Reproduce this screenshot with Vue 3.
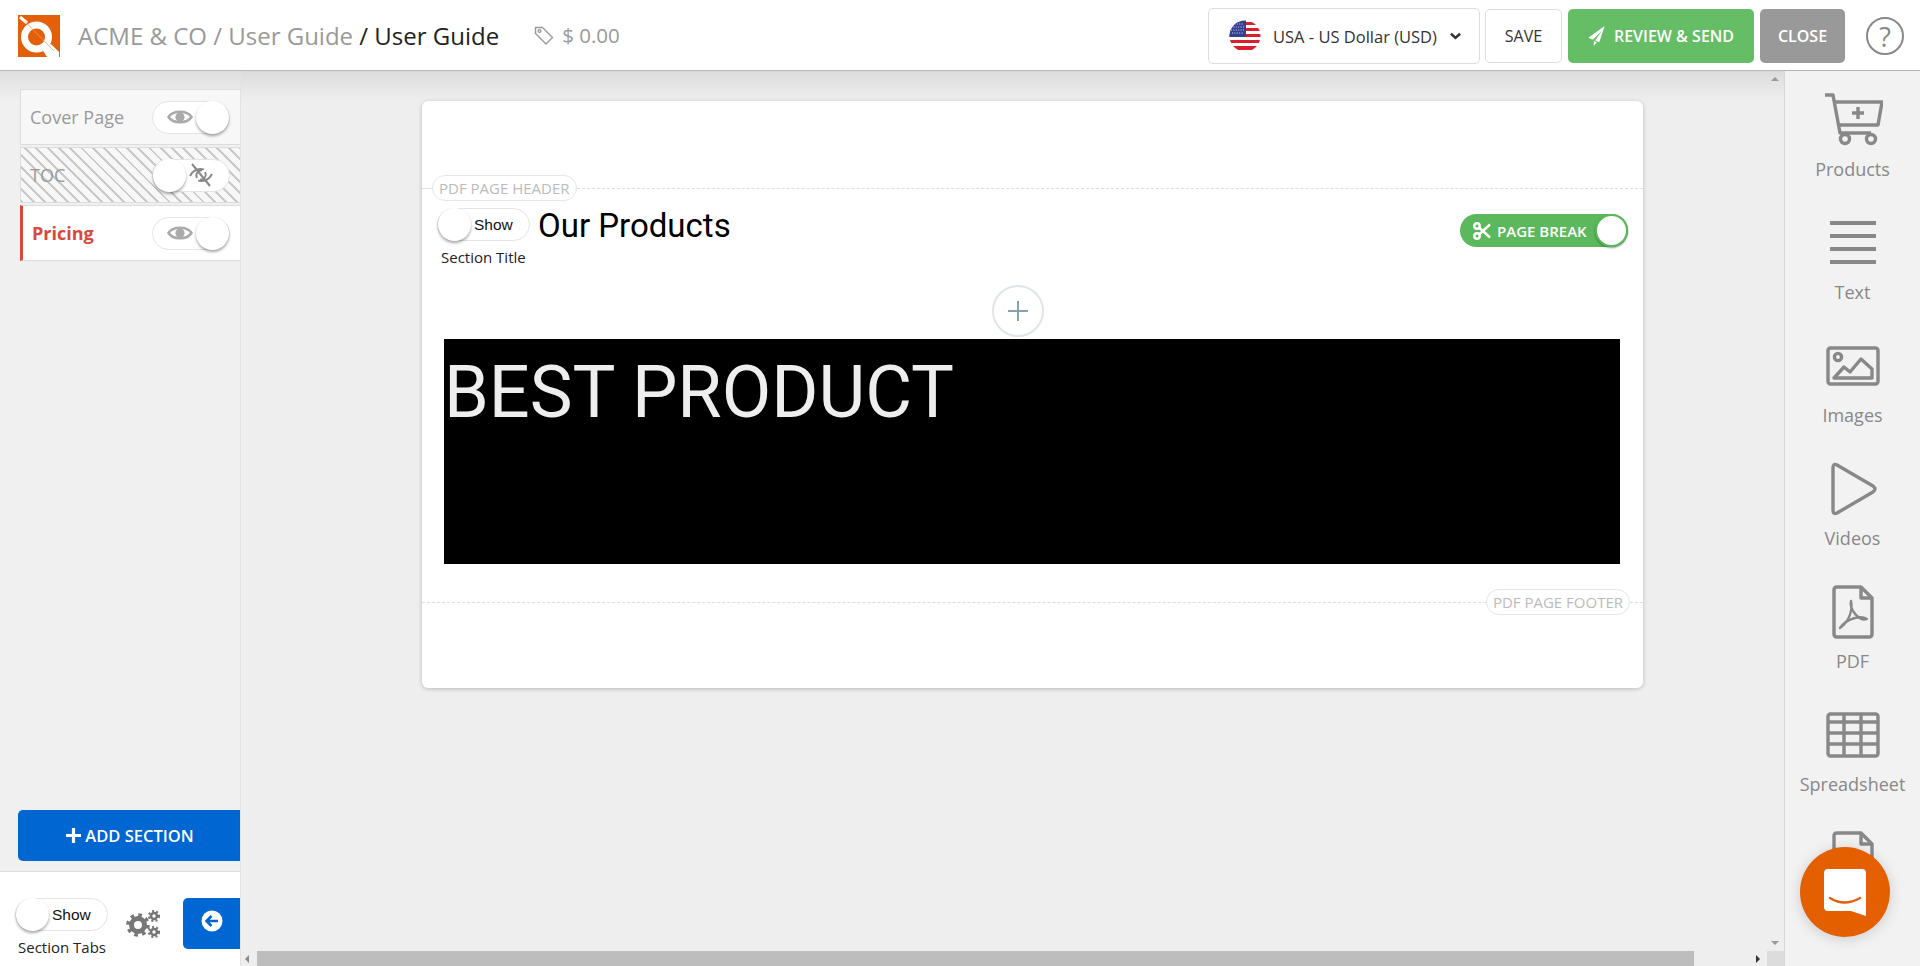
<script setup>
const sections = [
  { name: 'Cover Page', cls: 'cover', on: true },
  { name: 'TOC', cls: 'toc', on: false },
  { name: 'Pricing', cls: 'active', on: true }
]

const tools = ['Products', 'Text', 'Images', 'Videos', 'PDF', 'Spreadsheet', 'Files']
</script>

<template>
  <div class="app">
    <header class="topbar">
      <div class="logo">
        <svg viewBox="0 0 42 42" width="42" height="42">
          <rect width="42" height="42" fill="#e35f0a" />
          <path d="M2 2 L9 8" stroke="#fff" stroke-width="3" />
          <circle cx="18.500" cy="22" r="12" fill="none" stroke="#fff" stroke-width="7" />
          <path d="M24 34 L33 29 L41 37 V42 H29 Z" fill="#fff" />
          <path d="M7 6.500 L36 36" stroke="#ee9a66" stroke-width="0.800" />
        </svg>
      </div>
      <div class="crumbs"><span class="muted">ACME &amp; CO / User Guide</span> / User Guide</div>
      <div class="price">
        <svg viewBox="0 0 20 20" width="20" height="20" fill="none" stroke="#999" stroke-width="1.4" stroke-linejoin="round">
          <path d="M1.5 2.5 h7 l10 10 -6.5 6.5 -10.5 -10.5 z" />
          <circle cx="5.5" cy="6" r="1.4" />
        </svg>
        <span>$ 0.00</span>
      </div>
      <div class="top-actions">
        <div class="currency">
          <svg class="flag" viewBox="0 0 32 32" width="32" height="32">
            <defs><clipPath id="flagClip"><circle cx="16" cy="16" r="15.5" /></clipPath></defs>
            <g clip-path="url(#flagClip)">
              <rect width="32" height="32" fill="#fff" />
              <path d="M0 2h32v3H0zM0 8h32v3H0zM0 14h32v3H0zM0 20h32v3H0zM0 26h32v4H0z" fill="#d8212c" />
              <rect width="17" height="17" fill="#35418f" />
              <path d="M3 4h11M2 7h13M2 10h13M3 13h11" stroke="#cfd3ee" stroke-width="1.2" stroke-dasharray="1 1.4" />
            </g>
          </svg>
          <span>USA - US Dollar (USD)</span>
          <svg viewBox="0 0 12 8" width="11" height="8" fill="none" stroke="#333" stroke-width="2.8"><path d="M1 1.5 L6 6 L11 1.5" /></svg>
        </div>
        <button class="btn save">SAVE</button>
        <button class="btn send">
          <svg viewBox="0 0 18 22" width="17" height="20" fill="#fff"><path d="M18 0 L0 13 L5 15 L15 5 L7.5 16 L12 18 Z M6 16.5 V22 L9.5 18 Z" /></svg>
          REVIEW &amp; SEND
        </button>
        <button class="btn close">CLOSE</button>
        <div class="help">?</div>
      </div>
    </header>

    <div class="body">
      <aside class="sidebar">
        <div class="sections">
          <div v-for="s in sections" :key="s.name" class="section" :class="s.cls">
            <span class="section-name">{{ s.name }}</span>
            <div class="sw sw-eye" :class="{ off: !s.on }">
              <span class="knob"></span>
              <svg v-if="s.on" viewBox="0 0 26 20" width="26" height="20" fill="none" stroke="#aaa" stroke-width="2.6">
                <path d="M1.5 10 C6 3 20 3 24.5 10 C20 17 6 17 1.5 10 Z" />
                <circle cx="13" cy="10" r="4.6" fill="#aaa" stroke="none" />
              </svg>
              <svg v-else viewBox="0 0 26 24" width="26" height="24" fill="none" stroke="#888" stroke-width="1.800">
                <path d="M2 13 C5 7 11 5 16 6.500" />
                <path d="M24 11 C21 17 15 19 10 17.500" />
                <path d="M9 15 A5 5 0 0 1 14 7.500 M17 9 A5 5 0 0 1 12 16.500" />
                <path d="M4 1 L22 23" stroke-width="2" />
              </svg>
            </div>
          </div>
        </div>
        <button class="add-section">
          <svg viewBox="0 0 16 16" width="15" height="15" fill="none" stroke="#fff" stroke-width="3.4"><path d="M8 0 V16 M0 8 H16" /></svg>
          ADD SECTION
        </button>
        <div class="side-foot">
          <div class="show-block">
            <div class="sw sw-show"><span class="knob"></span><span>Show</span></div>
            <div class="show-label">Section Tabs</div>
          </div>
          <svg class="gears" viewBox="0 0 34 28" width="34" height="28" fill="none" stroke="#777">
            <circle cx="12" cy="15" r="6.5" stroke-width="5" />
            <circle cx="12" cy="15" r="10" stroke-width="3.6" stroke-dasharray="3.6 4.25" />
            <circle cx="28" cy="6" r="3" stroke-width="2.6" />
            <circle cx="28" cy="6" r="5" stroke-width="2.2" stroke-dasharray="2 2.2" />
            <circle cx="28" cy="22" r="3" stroke-width="2.6" />
            <circle cx="28" cy="22" r="5" stroke-width="2.2" stroke-dasharray="2 2.2" />
          </svg>
          <button class="collapse">
            <svg viewBox="0 0 22 22" width="22" height="22">
              <circle cx="11" cy="11" r="10.5" fill="#fff" />
              <path d="M17 11 H6 M10.5 6 L5.5 11 L10.5 16" fill="none" stroke="#0066d2" stroke-width="2.6" />
            </svg>
          </button>
        </div>
      </aside>

      <main class="workspace">
        <div class="work-row">
          <div class="canvas">
            <div class="page">
              <div class="rule">
                <span class="rule-line short"></span>
                <span class="rule-pill">PDF PAGE HEADER</span>
                <span class="rule-line"></span>
              </div>
              <div class="title-row">
                <div class="show-block">
                  <div class="sw sw-show"><span class="knob"></span><span>Show</span></div>
                  <div class="show-label">Section Title</div>
                </div>
                <h1 class="title">Our Products</h1>
                <div class="page-break">
                  <svg viewBox="0 0 18 18" width="18" height="18" fill="none" stroke="#fff" stroke-width="2.4">
                    <circle cx="4" cy="4" r="2.7" />
                    <circle cx="4" cy="14" r="2.7" />
                    <path d="M6 5.5 L17 15.5 M6 12.5 L17 2.5" />
                  </svg>
                  <span>PAGE BREAK</span>
                  <span class="knob"></span>
                </div>
              </div>
              <div class="add-row">
                <div class="add-circle">
                  <svg viewBox="0 0 22 22" width="22" height="22" fill="none" stroke="#8ba0ad" stroke-width="2"><path d="M11 1 V21 M1 11 H21" /></svg>
                </div>
              </div>
              <div class="banner">BEST PRODUCT</div>
              <div class="rule footer-rule">
                <span class="rule-line"></span>
                <span class="rule-pill">PDF PAGE FOOTER</span>
                <span class="rule-line short"></span>
              </div>
            </div>
          </div>
          <div class="vbar">
            <span class="tri up"></span>
            <span class="tri down"></span>
          </div>
        </div>
        <div class="hbar">
          <span class="tri left"></span>
          <div class="hthumb"></div>
          <span class="tri right"></span>
          <span class="corner"></span>
        </div>
      </main>

      <nav class="rail">
        <div v-for="t in tools" :key="t" class="tool">
          <div class="tool-icon">
            <svg viewBox="0 0 60 60" width="60" height="60" fill="none" stroke="#888" stroke-width="3.4" stroke-linejoin="round">
              <template v-if="t === 'Products'">
                <path d="M2 5 H10 L17 43 H48" />
                <path d="M12 12 H59 L55 35 H16" />
                <circle cx="22" cy="49" r="4.5" />
                <circle cx="48" cy="49" r="4.5" />
                <path d="M35 17 V29 M29 23 H41" />
              </template>
              <template v-else-if="t === 'Text'">
                <path d="M7 10 H53 M7 23 H53 M7 36 H53 M7 49 H53" stroke-width="4" />
              </template>
              <template v-else-if="t === 'Images'">
                <rect x="5" y="12" width="50" height="36" rx="2.500" />
                <circle cx="15" cy="21" r="3.600" />
                <path d="M11 42 L21 31 L27 36 L38 23 L49 33 V42 Z" />
              </template>
              <template v-else-if="t === 'Videos'">
                <path d="M14 6 Q10 4 10 9 V51 Q10 56 14 54 L50 33 Q54 30 50 27 Z" />
              </template>
              <template v-else-if="t === 'PDF'">
                <path d="M14 5 H38 L49 16 V52 Q49 55 46 55 H14 Q11 55 11 52 V8 Q11 5 14 5 Z" />
                <path d="M38 5 V16 H49" />
                <path d="M17 46 C26 40 30 28 28 19 C26 27 36 40 44 37 C38 33 24 36 17 46 Z" stroke-width="2.400" />
              </template>
              <template v-else-if="t === 'Spreadsheet'">
                <rect x="5" y="9" width="50" height="42" rx="2.500" />
                <path d="M5 17 H55 M5 28 H55 M5 39 H55 M21 9 V51 M38 9 V51" />
              </template>
              <template v-else>
                <path d="M14 5 H38 L49 16 V52 Q49 55 46 55 H14 Q11 55 11 52 V8 Q11 5 14 5 Z" />
                <path d="M38 5 V16 H49" />
              </template>
            </svg>
          </div>
          <div class="tool-label">{{ t }}</div>
        </div>
      </nav>
    </div>

    <div class="chat">
      <svg viewBox="0 0 42 48" width="42" height="48">
        <path d="M4 1 H38 Q42 1 42 5 V48 L27 43 H4 Q0 43 0 39 V5 Q0 1 4 1 Z" fill="#fff" />
        <path d="M6 30 Q20 39 36 30" fill="none" stroke="#e35f0a" stroke-width="2.400" stroke-linecap="round" />
      </svg>
    </div>
  </div>
</template>

<style>
html,
body {
  margin: 0;
  overflow: hidden;
}
</style>

<style scoped>
.app {
  position: relative;
  width: 1920px;
  height: 966px;
  overflow: hidden;
  display: flex;
  flex-direction: column;
  font-family: 'Open Sans', sans-serif;
  background: #eee;
}

button {
  font-family: inherit;
  border: none;
  cursor: pointer;
}

/* top bar */
.topbar {
  height: 70px;
  flex: none;
  display: flex;
  align-items: center;
  padding-left: 18px;
  background: #fff;
  border-bottom: 1px solid #b5b5b5;
  box-sizing: content-box;
}
.logo {
  height: 42px;
  margin-top: 1px;
}
.crumbs {
  margin-left: 18px;
  font-size: 24px;
  color: #222;
  white-space: nowrap;
}
.muted {
  color: #999;
}
.price {
  display: flex;
  align-items: center;
  gap: 8px;
  margin-left: 35px;
  font-size: 20.5px;
  color: #999;
}
.top-actions {
  margin-left: auto;
  margin-top: 2px;
  display: flex;
  align-items: center;
}
.currency {
  width: 272px;
  height: 56px;
  box-sizing: border-box;
  display: flex;
  align-items: center;
  padding-left: 20px;
  background: #fff;
  border: 1px solid #ddd;
  border-radius: 5px;
  font-size: 16.500px;
  color: #333;
}
.flag {
  margin-right: 12px;
}
.currency span {
  margin-right: 13px;
}
.btn {
  height: 54px;
  border-radius: 5px;
  font-size: 16px;
  font-weight: 600;
}
.save {
  width: 77px;
  margin-left: 5px;
  background: #fff;
  border: 1px solid #ddd;
  color: #333;
  font-weight: 500;
}
.send {
  width: 186px;
  margin-left: 6px;
  display: flex;
  align-items: center;
  justify-content: center;
  gap: 9px;
  background: #65bd66;
  color: #fff;
}
.close {
  width: 85px;
  margin-left: 6px;
  background: #999;
  color: #fff;
}
.help {
  width: 38px;
  height: 38px;
  box-sizing: border-box;
  margin-left: 21px;
  margin-right: 16px;
  display: flex;
  align-items: center;
  justify-content: center;
  border: 2px solid #888;
  border-radius: 50%;
  font-size: 27px;
  color: #888;
}

.body {
  flex: 1;
  min-height: 0;
  display: flex;
}

/* left panel */
.sidebar {
  width: 241px;
  flex: none;
  box-sizing: border-box;
  display: flex;
  flex-direction: column;
  background: linear-gradient(#dedede, #f0f0f0 30px);
  border-right: 1px solid #e2e2e2;
}
.sections {
  flex: 1;
  padding: 18px 0 0 20px;
}
.section {
  height: 56px;
  box-sizing: border-box;
  margin-bottom: 2px;
  padding: 0 10px 0 9px;
  display: flex;
  align-items: center;
  justify-content: space-between;
  border: 1px solid #ddd;
  border-right: none;
  font-size: 18px;
  color: #999;
}
.section.cover {
  background: #f7f7f7;
}
.section.toc {
  background: repeating-linear-gradient(45deg, #c9c9c9 0 2px, #f7f7f7 2px 8px);
}
.section.active {
  padding-left: 9px;
  background: #fff;
  border-left: 3px solid #d6493b;
  color: #d6493b;
  font-weight: 700;
}
.sw {
  display: flex;
  align-items: center;
  background: #fff;
  border: 1px solid #e4e4e4;
  border-radius: 17px;
  box-sizing: border-box;
}
.knob {
  display: block;
  flex: none;
  width: 33px;
  height: 33px;
  border-radius: 50%;
  background: #fff;
  box-shadow: 0 2px 3px rgba(0, 0, 0, 0.35);
}
.sw-eye {
  width: 78px;
  height: 33px;
  flex-direction: row-reverse;
  justify-content: space-between;
  padding-left: 14px;
}
.sw-eye.off {
  flex-direction: row;
  padding-left: 0;
  padding-right: 15px;
}
.sw-show {
  width: 93px;
  height: 33px;
  gap: 3px;
  font-family: 'Liberation Sans', sans-serif;
  font-size: 15.500px;
  color: #111;
}
.show-block {
  flex: none;
}
.show-label {
  margin: 6px 0 0 4px;
  font-size: 15px;
  line-height: 20px;
  color: #222;
}
.side-foot .show-label {
  margin-left: 3px;
}
.add-section {
  height: 51px;
  margin: 0 0 10px 18px;
  padding-left: 8px;
  display: flex;
  align-items: center;
  justify-content: center;
  gap: 4px;
  background: #0066d2;
  border-radius: 5px 0 0 5px;
  color: #fff;
  font-size: 16.500px;
  font-weight: 600;
  flex: none;
}
.side-foot {
  height: 95px;
  flex: none;
  box-sizing: border-box;
  padding: 26px 0 0 15px;
  display: flex;
  align-items: flex-start;
  background: #fff;
  border-top: 1px solid #ddd;
}
.gears {
  margin: 12px 0 0 18px;
}
.collapse {
  width: 57px;
  height: 51px;
  margin-left: 23px;
  background: #0066d2;
  border-radius: 5px 0 0 5px;
  display: flex;
  align-items: center;
  justify-content: center;
  padding: 0 0 6px 0;
}

/* centre */
.workspace {
  flex: 1;
  min-width: 0;
  display: flex;
  flex-direction: column;
  background: linear-gradient(#dcdcdc, #eee 30px);
}
.work-row {
  flex: 1;
  min-height: 0;
  display: flex;
}
.canvas {
  flex: 1;
  padding-top: 30px;
  padding-left: 181px;
}
.page {
  width: 1221px;
  height: 587px;
  box-sizing: border-box;
  padding-top: 74px;
  background: #fff;
  border-radius: 6px;
  box-shadow: 0 1px 4px rgba(0, 0, 0, 0.22);
}
.rule {
  display: flex;
  align-items: center;
  height: 26px;
}
.rule-line {
  flex: 1;
  border-top: 1px dashed #ddd;
}
.rule-line.short {
  flex: none;
  width: 10px;
}
.rule-pill {
  padding: 0 6px;
  line-height: 24px;
  border: 1px solid #e6e6e6;
  border-radius: 13px;
  font-size: 15px;
  color: #bbb;
  white-space: nowrap;
}
.title-row {
  display: flex;
  align-items: flex-start;
  padding: 7px 15px 0;
  height: 85px;
  box-sizing: content-box;
}
.title {
  margin: 1px 0 0 8px;
  font-family: Roboto, sans-serif;
  font-weight: 400;
  font-size: 33px;
  line-height: 33px;
  color: #000;
}
.page-break {
  margin: 6px 0 0 auto;
  width: 168px;
  height: 33px;
  box-sizing: border-box;
  display: flex;
  align-items: center;
  padding-left: 13px;
  background: #5cb85c;
  border-radius: 17px;
  font-size: 15px;
  font-weight: 600;
  color: #fff;
}
.page-break span:nth-child(2) {
  margin-left: 6px;
}
.page-break .knob {
  margin-left: auto;
  border: 2px solid #5cb85c;
  box-sizing: border-box;
  box-shadow: 0 1px 2px rgba(0, 0, 0, 0.4);
}
.add-row {
  height: 0;
  display: flex;
  justify-content: center;
  margin-left: -29px;
}
.add-circle {
  width: 52px;
  height: 52px;
  flex: none;
  box-sizing: border-box;
  margin-top: -8px;
  display: flex;
  align-items: center;
  justify-content: center;
  background: #fff;
  border: 2px solid #dfe5e8;
  border-radius: 50%;
}
.banner {
  margin: 46px 23px 0 22px;
  height: 225px;
  background: #000;
  color: #eee;
  font-family: Roboto, sans-serif;
  font-size: 72px;
  line-height: 108px;
  white-space: nowrap;
}
.footer-rule {
  margin-top: 25px;
}
.footer-rule .rule-line.short {
  width: 13px;
}
.vbar {
  width: 18px;
  flex: none;
  display: flex;
  flex-direction: column;
  justify-content: space-between;
  align-items: center;
  padding: 6px 0;
}
.hbar {
  height: 15px;
  flex: none;
  display: flex;
  align-items: center;
  padding-left: 4px;
}
.hthumb {
  width: 1438px;
  height: 15px;
  margin-left: 8px;
  background: #bdbdbd;
}
.corner {
  width: 17px;
  height: 15px;
  margin-left: 7px;
  background: #dcdcdc;
}
.tri {
  display: block;
  width: 0;
  height: 0;
  border: 4px solid transparent;
}
.tri.up {
  border-top: none;
  border-bottom-color: #999;
}
.tri.down {
  border-bottom: none;
  border-top-color: #999;
}
.tri.left {
  border-left: none;
  border-right-color: #888;
}
.tri.right {
  border-right: none;
  border-left-color: #333;
  margin-left: 62px;
}

/* right rail */
.rail {
  width: 136px;
  flex: none;
  box-sizing: border-box;
  overflow: hidden;
  padding-top: 19px;
  background: #f2f2f2;
  border-left: 1px solid #d8d8d8;
  display: flex;
  flex-direction: column;
  gap: 34px;
}
.tool {
  flex: none;
  text-align: center;
}
.tool-icon {
  height: 60px;
}
.tool-label {
  margin-top: 9px;
  line-height: 20px;
  font-size: 18px;
  color: #888;
}

.chat {
  position: absolute;
  left: 1800px;
  top: 847px;
  width: 90px;
  height: 90px;
  display: flex;
  align-items: center;
  justify-content: center;
  box-sizing: border-box;
  border-radius: 50%;
  background: #e35f00;
  box-shadow: 0 2px 14px rgba(0, 0, 0, 0.16);
}
</style>
